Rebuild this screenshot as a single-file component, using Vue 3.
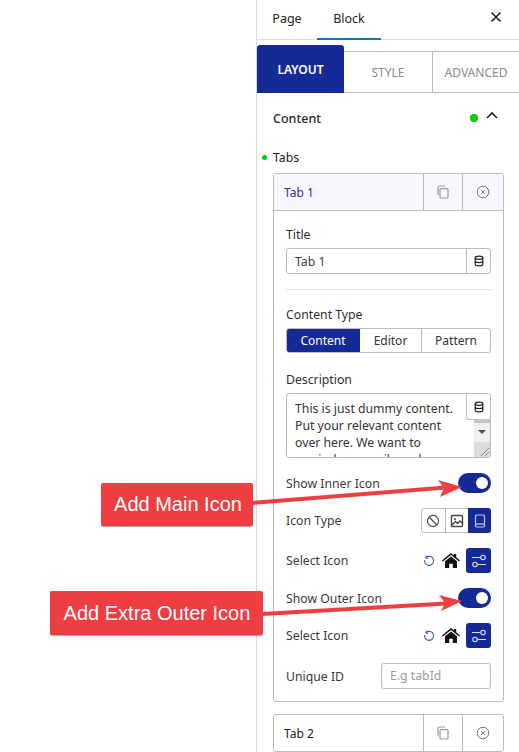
<template>
  <div class="page">
    <div class="canvas"></div>
    <aside class="panel">
      <div class="top-tabs">
        <span class="top-tab">Page</span>
        <span class="top-tab active">Block</span>
        <svg class="close" width="14" height="14" viewBox="0 0 14 14"><path d="M2.5 2.5l9 9M11.5 2.5l-9 9" stroke="#1e1e1e" stroke-width="1.6" fill="none" /></svg>
      </div>
      <div class="sub-tabs">
        <div class="sub-tab on">LAYOUT</div>
        <div class="sub-tab">STYLE</div>
        <div class="sub-tab">ADVANCED</div>
      </div>
      <div class="section-head">
        <span class="section-title">Content</span>
        <i class="dot"></i>
        <svg class="chev" width="14" height="10" viewBox="0 0 14 10"><path d="M2 7l5-5 5 5" stroke="#1e1e1e" stroke-width="1.6" fill="none" /></svg>
      </div>
      <div class="tabs-label"><i class="dot small"></i>Tabs</div>

      <div class="card">
        <div class="card-head tinted">
          <span class="card-name purple">Tab 1</span>
          <span class="head-btn"><svg width="14" height="14" viewBox="0 0 14 14" fill="none" stroke="#9a9a9a" stroke-width="1.2"><rect x="4" y="3.6" width="8" height="9.4" rx="1" /><path d="M2 10V2.4C2 1.6 2.6 1 3.4 1H9" /></svg></span>
          <span class="head-btn last"><svg width="14" height="14" viewBox="0 0 14 14" fill="none" stroke="#777" stroke-width="1"><circle cx="7" cy="7" r="5.8" /><path d="M5 5l4 4M9 5l-4 4" /></svg></span>
        </div>
        <div class="card-body">
          <div class="label first">Title</div>
          <div class="input-wrap">
            <span class="input-text">Tab 1</span>
            <span class="db"><svg width="12" height="12" viewBox="0 0 12 12" fill="none" stroke="#222" stroke-width="1.2"><ellipse cx="6" cy="2.8" rx="3.8" ry="1.6" /><path d="M2.2 2.8v6.4c0 .9 1.7 1.6 3.8 1.6s3.800-.7 3.800-1.600V2.800M2.200 6c0 .9 1.700 1.600 3.800 1.600S9.800 6.900 9.800 6" /></svg></span>
          </div>
          <div class="rule"></div>
          <div class="label">Content Type</div>
          <div class="segments">
            <span class="seg on">Content</span>
            <span class="seg editor">Editor</span>
            <span class="seg pattern">Pattern</span>
          </div>
          <div class="label desc">Description</div>
          <div class="textarea">
            <p>This is just dummy content. Put your relevant content over here. We want to remind you easily and</p>
            <span class="db floating"><svg width="12" height="12" viewBox="0 0 12 12" fill="none" stroke="#222" stroke-width="1.2"><ellipse cx="6" cy="2.8" rx="3.8" ry="1.6" /><path d="M2.2 2.8v6.4c0 .9 1.700 1.600 3.800 1.600s3.800-.7 3.800-1.600V2.800M2.200 6c0 .9 1.700 1.600 3.800 1.600S9.800 6.900 9.800 6" /></svg></span>
            <span class="scroll">
              <i class="thumb"></i>
              <i class="arrow"></i>
              <i class="grip"><svg width="16" height="15" viewBox="0 0 16 15"><path d="M7 14l8-8M11 14l4-4" stroke="#888" stroke-width="1" /></svg></i>
            </span>
          </div>

          <div class="row toggle-row">
            <span class="row-label">Show Inner Icon</span>
            <span class="toggle"><i></i></span>
          </div>
          <div class="row type-row">
            <span class="row-label">Icon Type</span>
            <div class="icon-type">
              <span class="type-btn"><svg width="14" height="14" viewBox="0 0 14 14" fill="none" stroke="#444" stroke-width="1.1"><circle cx="7" cy="7" r="5.6" /><path d="M3 3l8 8" /></svg></span>
              <span class="type-btn"><svg width="14" height="14" viewBox="0 0 14 14" fill="none" stroke="#444" stroke-width="1.4"><rect x="1.500" y="1.500" width="11" height="11" rx="1" /><path d="M2 11l3.500-3.500 2 2L10 7l2.500 2.500" /><circle cx="5" cy="5" r="1" fill="#444" stroke="none" /></svg></span>
              <span class="type-btn on"><svg width="14" height="14" viewBox="0 0 14 14" fill="none" stroke="#c8cef0" stroke-width="1.2"><rect x="2.500" y="1" width="9" height="12" rx="1.500" /><path d="M2.500 10h9" /></svg></span>
            </div>
          </div>
          <div class="row select-row">
            <span class="row-label">Select Icon</span>
            <svg class="reload" width="12" height="12" viewBox="0 0 12 12" fill="none" stroke="#3f55c4" stroke-width="1.100"><path d="M3.400 2.300A4.500 4.500 0 1 1 1.700 5" /><path d="M4.300 .6L2.700 2.500l2 1.300" /></svg>
            <svg class="home" width="18" height="15" viewBox="0 0 18 15"><path fill="#111" d="M9 0l3 2.500V1h2.200v3.300L18 7.500l-.9 1L9 2 .9 8.500 0 7.500z M9 3.400l6 4.800V15h-4.200v-4.300H7.200V15H3V8.200z" /></svg>
            <span class="pick"><svg width="16" height="14" viewBox="0 0 16 14" fill="none" stroke="#dfe3fa" stroke-width="1.100"><circle cx="12" cy="3.500" r="2.200" /><path d="M1 3.500h8.500M6.500 10.500H15" /><circle cx="4" cy="10.500" r="2.200" /></svg></span>
          </div>
          <div class="row toggle-row outer">
            <span class="row-label">Show Outer Icon</span>
            <span class="toggle"><i></i></span>
          </div>
          <div class="row select-row second">
            <span class="row-label">Select Icon</span>
            <svg class="reload" width="12" height="12" viewBox="0 0 12 12" fill="none" stroke="#3f55c4" stroke-width="1.100"><path d="M3.400 2.300A4.500 4.500 0 1 1 1.700 5" /><path d="M4.300 .6L2.700 2.500l2 1.300" /></svg>
            <svg class="home" width="18" height="15" viewBox="0 0 18 15"><path fill="#111" d="M9 0l3 2.500V1h2.200v3.300L18 7.500l-.9 1L9 2 .9 8.500 0 7.500z M9 3.400l6 4.800V15h-4.200v-4.300H7.200V15H3V8.200z" /></svg>
            <span class="pick"><svg width="16" height="14" viewBox="0 0 16 14" fill="none" stroke="#dfe3fa" stroke-width="1.100"><circle cx="12" cy="3.500" r="2.200" /><path d="M1 3.500h8.500M6.500 10.500H15" /><circle cx="4" cy="10.500" r="2.200" /></svg></span>
          </div>
          <div class="row id-row">
            <span class="row-label">Unique ID</span>
            <span class="id-input">E.g tabId</span>
          </div>
        </div>
      </div>

      <div class="card closed">
        <div class="card-head">
          <span class="card-name">Tab 2</span>
          <span class="head-btn"><svg width="14" height="14" viewBox="0 0 14 14" fill="none" stroke="#9a9a9a" stroke-width="1.2"><rect x="4" y="3.6" width="8" height="9.4" rx="1" /><path d="M2 10V2.400C2 1.600 2.600 1 3.400 1H9" /></svg></span>
          <span class="head-btn last"><svg width="14" height="14" viewBox="0 0 14 14" fill="none" stroke="#777" stroke-width="1"><circle cx="7" cy="7" r="5.800" /><path d="M5 5l4 4M9 5l-4 4" /></svg></span>
        </div>
      </div>
    </aside>

    <!-- annotations lie over the screenshot -->
    <div class="note note-main">Add Main Icon</div>
    <div class="note note-outer">Add Extra Outer Icon</div>
    <svg class="arrows" width="519" height="752" viewBox="0 0 519 752">
      <path d="M252 503L446 487.500" stroke="#ef3e42" stroke-width="4" fill="none" />
      <path d="M438 480L462 487 440 497 444 488z" fill="#ef3e42" />
      <path d="M262 614L446 603.500" stroke="#ef3e42" stroke-width="4" fill="none" />
      <path d="M439 595L462 601 441 611 445 603z" fill="#ef3e42" />
    </svg>
  </div>
</template>

<script setup>
</script>

<style>
html,
body {
  margin: 0;
  background: #fff;
}
</style>

<style scoped>
.page {
  position: relative;
  display: flex;
  width: 519px;
  height: 752px;
  overflow: hidden;
  font-family: "Noto Sans", "Open Sans", sans-serif;
  font-size: 12.250px;
  color: #333;
  background: #fff;
}

.canvas {
  width: 256px;
  flex: none;
}

.panel {
  width: 263px;
  flex: none;
  box-sizing: border-box;
  border-left: 1px solid #d9d9d9;
}

.top-tabs {
  height: 40px;
  box-sizing: border-box;
  display: flex;
  align-items: center;
  border-bottom: 1px solid #ddd;
  position: relative;
  font-size: 12.500px;
}

.top-tab {
  width: 64px;
  height: 40px;
  line-height: 37px;
  text-align: center;
  color: #1e1e1e;
  box-sizing: border-box;
}

.top-tab:first-child {
  width: 60px;
}

.top-tab.active {
  border-bottom: 2px solid #007cba;
}

.close {
  margin-left: auto;
  margin-right: 16px;
  margin-top: -6px;
}

.sub-tabs {
  display: flex;
  height: 48px;
  margin-top: 5px;
  align-items: flex-end;
}

.sub-tab {
  flex: none;
  width: 89px;
  height: 42px;
  box-sizing: border-box;
  border: 1px solid #bbb;
  border-left: none;
  text-align: center;
  line-height: 42px;
  font-size: 12px;
  color: #8b8b8b;
}

.sub-tab:last-child {
  width: 86px;
  border-right: none;
}

.sub-tab.on {
  width: 87px;
  height: 48px;
  line-height: 50px;
  border: none;
  border-radius: 3px 3px 0 0;
  background: #162a97;
  color: #fff;
  font-weight: 600;
}

.section-head {
  display: flex;
  align-items: center;
  height: 50px;
  padding: 0 20px 0 16px;
  font-size: 12.500px;
}

.section-title {
  color: #2a2a2a;
  font-weight: 500;
  margin-right: auto;
}

.dot {
  display: inline-block;
  width: 8px;
  height: 8px;
  border-radius: 50%;
  background: #00cc00;
}

.chev {
  margin-left: 7px;
  margin-top: -4px;
}

.tabs-label {
  position: relative;
  padding-left: 16px;
  margin-top: 6px;
  height: 24px;
  line-height: 18px;
  color: #222;
}

.dot.small {
  position: absolute;
  left: 5px;
  top: 6px;
  width: 5px;
  height: 5px;
}

.card {
  width: 231px;
  margin-left: 16px;
  box-sizing: border-box;
  border: 1px solid #bbb;
  border-radius: 3px;
}

.card.closed {
  margin-top: 12px;
}

.card-head {
  display: flex;
  height: 36px;
  align-items: stretch;
}

.card-head.tinted {
  background: #f8f7fe;
  border-bottom: 1px solid #bbb;
}

.card-name {
  flex: 1;
  padding-left: 10px;
  line-height: 38px;
  font-size: 12px;
  color: #222;
}

.card-name.purple {
  color: #3b2a92;
}

.head-btn {
  width: 38px;
  flex: none;
  display: flex;
  align-items: center;
  justify-content: center;
  border-left: 1px solid #bbb;
}

.head-btn.last {
  width: 40px;
}

.card-body {
  padding: 15px 12px 12px;
}

.label {
  line-height: 18px;
  height: 18px;
  color: #2e2e2e;
  margin-top: 16px;
}

.label.first {
  margin-top: 0;
}

.input-wrap {
  display: flex;
  height: 26px;
  margin-top: 4px;
  box-sizing: border-box;
  border: 1px solid #bbb;
  border-radius: 3px;
  justify-content: space-between;
  align-items: stretch;
}

.input-text {
  padding-left: 8px;
  line-height: 26px;
  color: #3c3c3c;
}

.db {
  width: 23px;
  display: flex;
  align-items: center;
  justify-content: center;
  border-left: 1px solid #bbb;
}

.rule {
  height: 1px;
  background: #e2e2e2;
  margin-top: 15px;
}

.segments {
  display: flex;
  height: 25px;
  margin-top: 4px;
  box-sizing: border-box;
  border: 1px solid #bbb;
  border-radius: 3px;
  overflow: hidden;
}

.seg {
  text-align: center;
  line-height: 23px;
  font-size: 12px;
  color: #333;
}

.seg.on {
  width: 74px;
  margin: -1px 0 -1px -1px;
  line-height: 25px;
  background: #162a97;
  color: #fff;
}

.seg.editor {
  width: 61px;
}

.seg.pattern {
  flex: 1;
  border-left: 1px solid #bbb;
}

.label.desc {
  margin-top: 18px;
}

.textarea {
  position: relative;
  height: 65px;
  margin-top: 4px;
  box-sizing: border-box;
  border: 1px solid #bbb;
  border-radius: 3px;
  overflow: hidden;
}

.textarea p {
  margin: 0;
  padding: 6px 32px 0 8px;
  line-height: 17px;
  color: #333;
}

.db.floating {
  position: absolute;
  top: 0;
  right: 0;
  height: 25px;
  background: #fff;
  border-bottom: 1px solid #bbb;
  border-radius: 0 0 0 3px;
}

.scroll {
  position: absolute;
  right: 0;
  top: 25px;
  bottom: 0;
  width: 16px;
  background: #f0f0f0;
}

.thumb {
  display: block;
  height: 4px;
  background: #c4c4c4;
}

.arrow {
  display: block;
  width: 0;
  height: 0;
  margin: 7px auto 0;
  border: 4px solid transparent;
  border-top: 4px solid #505050;
  border-bottom: none;
}

.grip {
  position: absolute;
  left: 0;
  right: 0;
  bottom: 0;
  height: 15px;
  background: #dcdcdc;
}

.grip svg {
  display: block;
}

.row {
  display: flex;
  align-items: center;
}

.row-label {
  color: #3a3a3a;
  margin-right: auto;
}

.toggle-row {
  height: 20px;
  margin-top: 15px;
}

.toggle {
  position: relative;
  width: 33px;
  height: 20px;
  border-radius: 10px;
  background: #162a97;
}

.toggle i {
  position: absolute;
  top: 4px;
  right: 3px;
  width: 12px;
  height: 12px;
  border-radius: 50%;
  background: #fff;
}

.type-row {
  height: 25px;
  margin-top: 15px;
}

.icon-type {
  display: flex;
  width: 70px;
  height: 25px;
  box-sizing: border-box;
  border: 1px solid #bbb;
  border-radius: 3px;
}

.type-btn {
  flex: 1;
  display: flex;
  align-items: center;
  justify-content: center;
  border-left: 1px solid #bbb;
}

.type-btn:first-child {
  border-left: none;
}

.type-btn.on {
  margin: -1px -1px -1px 0;
  border: none;
  border-radius: 0 3px 3px 0;
  background: #162a97;
}

.select-row {
  height: 25px;
  margin-top: 15px;
}

.reload {
  margin-right: 7px;
}

.home {
  margin-right: 6px;
}

.pick {
  width: 25px;
  height: 25px;
  border-radius: 3px;
  background: #162a97;
  display: flex;
  align-items: center;
  justify-content: center;
}

.id-row {
  height: 26px;
  margin-top: 15px;
}

.id-input {
  width: 110px;
  height: 26px;
  box-sizing: border-box;
  border: 1px solid #bbb;
  border-radius: 3px;
  padding-left: 8px;
  line-height: 24px;
  color: #9a9a9a;
}

.note {
  position: absolute;
  box-sizing: border-box;
  background: #ef3e42;
  border-radius: 2px;
  box-shadow: 0 1px 1px rgba(0, 0, 0, 0.35);
  color: #fff;
  font-family: "Liberation Sans", Arial, sans-serif;
  font-size: 20px;
  text-align: center;
}

.note-main {
  left: 101px;
  top: 483px;
  width: 152px;
  height: 43px;
  line-height: 43px;
  padding-left: 2px;
}

.note-outer {
  left: 50px;
  top: 591px;
  width: 213px;
  height: 44px;
  line-height: 44px;
  padding-left: 1px;
}

.arrows {
  position: absolute;
  left: 0;
  top: 0;
  pointer-events: none;
}
</style>
